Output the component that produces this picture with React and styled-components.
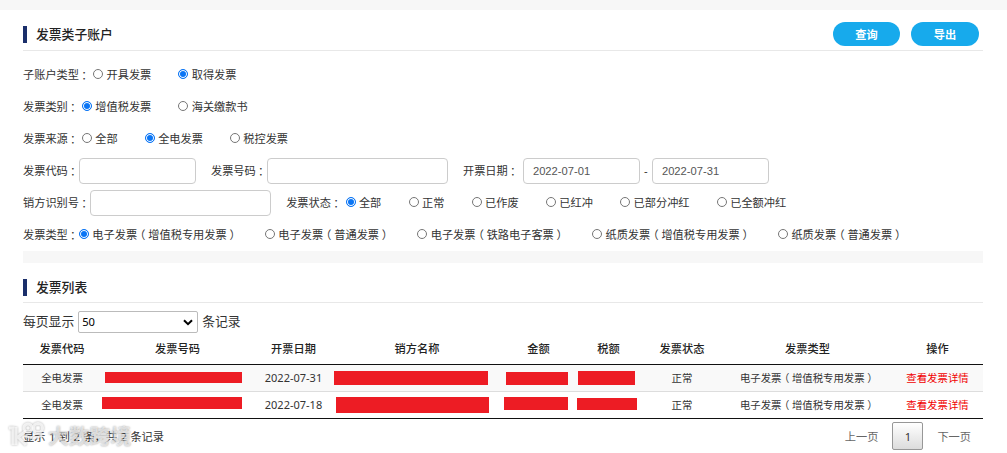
import React from "react";
import styled, { createGlobalStyle } from "styled-components";

const Global = createGlobalStyle`
  * { box-sizing: border-box; }
  body {
    margin: 0;
    background: #fff;
    color: #333;
    font-family: "Noto Sans", "Noto Sans CJK SC", sans-serif;
    font-size: 11.2px;
    overflow: hidden;
  }
`;

const Page = styled.div`
  position: relative;
  height: 453px;
  overflow: hidden;
  border-top: 10px solid #f7f7f7;
  padding: 0 24px 0 23px;
`;

const SectionHead = styled.header`
  display: flex;
  align-items: center;
  height: ${(p) => p.$height}px;
  padding: ${(p) => p.$top}px 4px 0 0;
  border-bottom: 1px solid #e8e8e8;
`;

const Title = styled.h2`
  flex: 1;
  margin: 0;
  height: 17px;
  line-height: 17px;
  padding-left: 9px;
  border-left: 4px solid #1b2f6b;
  font-size: 12.8px;
  font-weight: 500;
  color: #222;
`;

const PillButton = styled.button`
  width: ${(p) => p.$width}px;
  height: 24px;
  margin-left: 11px;
  padding: 0 0 1px;
  border: 0;
  border-radius: 12px;
  background: #17aaec;
  color: #fff;
  font: 700 11.2px/22px "Noto Sans CJK SC", sans-serif;
`;

const Filters = styled.form`
  padding-top: 8px;
  height: 200px;
`;

const FilterRow = styled.div`
  display: flex;
  align-items: center;
  height: 32px;
  white-space: nowrap;
`;

const Label = styled.span`
  margin-left: ${(p) => p.$before || 0}px;
  margin-right: ${(p) => p.$after || 0}px;
  padding-bottom: 2px;
`;

const Colon = styled.span`
  display: inline-block;
  line-height: 1;
  font-family: "Noto Sans CJK TC", sans-serif;
  transform: translate(-0.5px, 1px);
`;

const Paren = styled.span`
  display: inline-block;
  padding: 0 0.25em;
  line-height: 1;
  font-feature-settings: "halt";
`;

const Options = styled.div`
  display: flex;
  gap: ${(p) => p.$gap}px;
`;

const Option = styled.label`
  display: flex;
  align-items: center;
  padding-bottom: 2px;
`;

const Radio = styled.span`
  flex: none;
  width: 10px;
  height: 10px;
  margin: 0 3.4px 0 0;
  border: 1px solid ${(p) => (p.$on ? "#0a75f5" : "#767676")};
  border-radius: 50%;
  background: ${(p) => (p.$on ? "#0a75f5" : "#fff")};
  box-shadow: inset 0 0 0 1px #fff;
`;

const Input = styled.input`
  width: ${(p) => p.$width}px;
  height: 26px;
  padding: 0 9px;
  border: 1px solid #ccc;
  border-radius: 4px;
  background: #fff;
  color: #555;
  font: 11.2px "Liberation Sans", sans-serif;
  outline: 0;
`;

const Dash = styled.span`
  width: 12px;
  padding-bottom: 2px;
  text-align: center;
`;

const Divider = styled.div`
  height: 12px;
  background: #f7f7f7;
`;

const PageSize = styled.div`
  display: flex;
  align-items: center;
  height: 22px;
  margin-top: 8px;
  font-size: 12.8px;
  line-height: 20px;
`;

const PageSizeText = styled.span`
  padding-bottom: 2px;
`;

const SelectBox = styled.div`
  display: flex;
  align-items: center;
  justify-content: space-between;
  width: 120px;
  height: 22px;
  margin: 0 4px;
  padding: 0 4px 0 3px;
  border: 1px solid #bbb;
  border-radius: 2px;
  color: #000;
  font-size: 11.2px;
`;

const Table = styled.table`
  width: 960px;
  table-layout: fixed;
  border-collapse: collapse;
  border-bottom: 1px solid #111;
`;

const HeadCell = styled.th`
  height: 31px;
  padding: 0;
  border-bottom: 1px solid #111;
  font-weight: 500;
  color: #222;
`;

const Row = styled.tr`
  height: 27px;
  background: ${(p) => (p.$striped ? "#f9f9f9" : "#fff")};
  border-top: ${(p) => (p.$striped ? "0" : "1px solid #ddd")};
`;

const Cell = styled.td`
  height: 27px;
  padding: 0;
  font-size: ${(p) => (p.$date ? 11 : 10.4)}px;
  line-height: 16px;
  text-align: center;
  vertical-align: ${(p) => (p.$masked ? "top" : "middle")};
  white-space: nowrap;
`;

const Mask = styled.div`
  width: ${(p) => p.$w}px;
  height: ${(p) => p.$h}px;
  margin: ${(p) => p.$y}px 0 0 ${(p) => p.$x}px;
  background: #ed1c24;
`;

const Detail = styled.a`
  color: #f00000;
`;

const Footer = styled.footer`
  display: flex;
  align-items: center;
  height: 34px;
`;

const Summary = styled.div`
  flex: 1;
  word-spacing: 0.6px;
`;

const Pager = styled.nav`
  display: flex;
  align-items: center;
  gap: 14px;
  padding: 1px 12px 0 0;
  color: #666;
`;

const Current = styled.span`
  width: 31px;
  height: 28px;
  border: 1px solid #979797;
  border-radius: 2px;
  background: linear-gradient(#fff, #dcdcdc);
  color: #333;
  line-height: 27px;
  text-align: center;
`;

const Watermark = styled.div`
  position: absolute;
  left: 8px;
  top: 410px;
  display: flex;
  align-items: center;
  gap: 2px;
  height: 30px;
  color: rgba(255, 255, 255, 0.6);
  font: 700 20.8px/30px "Noto Sans CJK SC", sans-serif;
  text-shadow: 0 0 2px rgba(0, 0, 0, 0.4);
  white-space: nowrap;

  svg { filter: drop-shadow(0 0 1px rgba(0, 0, 0, 0.4)); }
`;

const withParens = (text) =>
  text.split(/([（）])/).map((part, i) =>
    part === "（" || part === "）" ? <Paren key={i}>{part}</Paren> : part
  );

const FieldLabel = ({ children, before, after }) => (
  <Label $before={before} $after={after}>
    {children}
    <Colon>：</Colon>
  </Label>
);

const RadioGroup = ({ items, selected, gap = 27 }) => (
  <Options $gap={gap}>
    {items.map((item, i) => (
      <Option key={item}>
        <Radio $on={i === selected} />
        <span>{withParens(item)}</span>
      </Option>
    ))}
  </Options>
);

const columns = [
  ["发票代码", 78], ["发票号码", 153], ["开票日期", 79], ["销方名称", 168], ["金额", 75],
  ["税额", 65], ["发票状态", 82], ["发票类型", 169], ["操作", 91],
];

const rows = [
  {
    date: "2022-07-31",
    masks: [[4, 7, 137, 11], [1, 6, 154, 14], [5, 7, 62, 13], [2, 6, 57, 14]],
  },
  {
    date: "2022-07-18",
    masks: [[1, 5, 140, 12], [3, 5, 153, 16], [3, 5, 64, 13], [1, 6, 60, 12]],
  },
];

const MaskedCell = ({ box: [x, y, w, h] }) => (
  <Cell $masked>
    <Mask $x={x} $y={y} $w={w} $h={h} />
  </Cell>
);

export default function App() {
  return (
    <Page>
      <Global />
      <SectionHead $height={41} $top={8}>
        <Title>发票类子账户</Title>
        <PillButton $width={67}>查询</PillButton>
        <PillButton $width={68}>导出</PillButton>
      </SectionHead>

      <Filters>
        <FilterRow>
          <FieldLabel after={3}>子账户类型</FieldLabel>
          <RadioGroup items={["开具发票", "取得发票"]} selected={1} />
        </FilterRow>
        <FilterRow>
          <FieldLabel after={3}>发票类别</FieldLabel>
          <RadioGroup items={["增值税发票", "海关缴款书"]} selected={0} />
        </FilterRow>
        <FilterRow>
          <FieldLabel after={3}>发票来源</FieldLabel>
          <RadioGroup items={["全部", "全电发票", "税控发票"]} selected={1} />
        </FilterRow>
        <FilterRow>
          <FieldLabel>发票代码</FieldLabel>
          <Input $width={117} />
          <FieldLabel before={15}>发票号码</FieldLabel>
          <Input $width={181} />
          <FieldLabel before={15} after={4}>开票日期</FieldLabel>
          <Input $width={117} defaultValue="2022-07-01" />
          <Dash>-</Dash>
          <Input $width={117} defaultValue="2022-07-31" />
        </FilterRow>
        <FilterRow>
          <FieldLabel>销方识别号</FieldLabel>
          <Input $width={181} />
          <FieldLabel before={15} after={3.4}>发票状态</FieldLabel>
          <RadioGroup
            items={["全部", "正常", "已作废", "已红冲", "已部分冲红", "已全额冲红"]}
            selected={0}
            gap={27.3}
          />
        </FilterRow>
        <FilterRow>
          <FieldLabel>发票类型</FieldLabel>
          <RadioGroup
            items={[
              "电子发票（增值税专用发票）",
              "电子发票（普通发票）",
              "电子发票（铁路电子客票）",
              "纸质发票（增值税专用发票）",
              "纸质发票（普通发票）",
            ]}
            selected={0}
            gap={27.1}
          />
        </FilterRow>
      </Filters>

      <Divider />

      <SectionHead $height={40} $top={10}>
        <Title>发票列表</Title>
      </SectionHead>

      <PageSize>
        <PageSizeText>每页显示</PageSizeText>
        <SelectBox>
          50
          <svg width="10" height="7" viewBox="0 0 10 7" fill="none" stroke="#000" strokeWidth="2">
            <path d="M1 1.2 5 5.2 9 1.2" />
          </svg>
        </SelectBox>
        <PageSizeText>条记录</PageSizeText>
      </PageSize>

      <Table>
        <colgroup>
          {columns.map(([name, width]) => (
            <col key={name} width={width} />
          ))}
        </colgroup>
        <thead>
          <tr>
            {columns.map(([name]) => (
              <HeadCell key={name}>{name}</HeadCell>
            ))}
          </tr>
        </thead>
        <tbody>
          {rows.map(({ date, masks }, i) => (
            <Row key={date} $striped={i === 0}>
              <Cell>全电发票</Cell>
              <MaskedCell box={masks[0]} />
              <Cell $date>{date}</Cell>
              <MaskedCell box={masks[1]} />
              <MaskedCell box={masks[2]} />
              <MaskedCell box={masks[3]} />
              <Cell>正常</Cell>
              <Cell>{withParens("电子发票（增值税专用发票）")}</Cell>
              <Cell><Detail>查看发票详情</Detail></Cell>
            </Row>
          ))}
        </tbody>
      </Table>

      <Footer>
        <Summary>显示 1 到 2 条，共 2 条记录</Summary>
        <Pager>
          <span>上一页</span>
          <Current>1</Current>
          <span>下一页</span>
        </Pager>
      </Footer>

      <Watermark>
        <svg width="38" height="26" viewBox="0 0 38 26" fill="none" stroke="#fff" strokeOpacity="0.75" strokeWidth="3">
          <path d="M1 6h4v17" />
          <path d="M8 5v18M18 9 10 15l8 8" />
          <circle cx="20" cy="6" r="4" />
          <circle cx="30" cy="6" r="4.5" />
          <path d="M17 13c4 4 12 4 17 0" strokeWidth="2" />
        </svg>
        大数跨境
      </Watermark>
    </Page>
  );
}
